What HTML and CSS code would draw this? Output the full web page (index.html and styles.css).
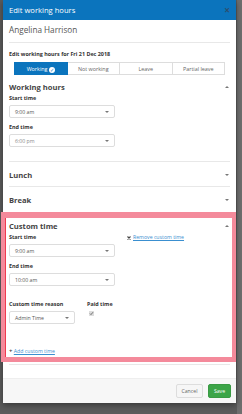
FILE: index.html
```html
<!DOCTYPE html>
<html lang="en">
<head>
    <meta charset="UTF-8">
    <title>Edit working hours</title>
    <link rel="stylesheet" href="styles.css">
</head>
<body>
    <div class="backdrop-strip"></div>
    <div class="modal">
        <div class="modal-header">
            <span class="modal-title">Edit working hours</span>
            <span class="modal-close">&times;</span>
        </div>

        <div class="modal-body">
            <div class="employee-name">Angelina Harrison</div>

            <div class="date-label">Edit working hours for Fri 21 Dec 2018</div>
            <div class="segments">
                <button class="segment active">Working <span class="tick">&#10003;</span></button>
                <button class="segment">Not working</button>
                <button class="segment">Leave</button>
                <button class="segment">Partial leave</button>
            </div>

            <div class="section">
                <div class="section-head">
                    <span>Working hours</span>
                    <span class="caret up"></span>
                </div>
                <label class="field-label">Start time</label>
                <div class="select">9:00 am<span class="caret"></span></div>
                <label class="field-label">End time</label>
                <div class="select muted">6:00 pm<span class="caret"></span></div>
            </div>

            <div class="section collapsed">
                <div class="section-head">
                    <span>Lunch</span>
                    <span class="caret"></span>
                </div>
            </div>

            <div class="section collapsed last">
                <div class="section-head">
                    <span>Break</span>
                    <span class="caret"></span>
                </div>
            </div>
        </div>

        <div class="highlight">
            <div class="section-head">
                <span>Custom time</span>
                <span class="caret up"></span>
            </div>
            <div class="row">
                <div class="col">
                    <label class="field-label">Start time</label>
                    <div class="select">9:00 am<span class="caret"></span></div>
                    <label class="field-label">End time</label>
                    <div class="select">10:00 am<span class="caret"></span></div>
                </div>
                <a class="remove-link">
                    <svg class="x" width="4" height="4" viewBox="0 0 4 4"><path d="M0.5 0.5L3.5 3.5M3.5 0.5L0.5 3.5" stroke="#444" stroke-width="1.1"/></svg>
                    <u>Remove custom time</u>
                </a>
            </div>
            <div class="row reason-row">
                <div>
                    <label class="field-label">Custom time reason</label>
                    <div class="select small">Admin Time<span class="caret"></span></div>
                </div>
                <div class="paid">
                    <label class="field-label">Paid time</label>
                    <span class="checkbox">
                        <svg width="5" height="5" viewBox="0 0 5 5"><path d="M1 2.6L2 3.6L4 1.2" stroke="#555" stroke-width="0.8" fill="none"/></svg>
                    </span>
                </div>
            </div>
            <a class="add-link"><span class="plus">+</span> <u>Add custom time</u></a>
        </div>

        <div class="body-end"></div>

        <div class="modal-footer">
            <button class="btn btn-cancel">Cancel</button>
            <button class="btn btn-save">Save</button>
        </div>
    </div>
</body>
</html>
```

FILE: styles.css
```css
* {
    margin: 0;
    padding: 0;
    box-sizing: border-box;
    font-family: 'Open Sans', sans-serif;
}

body {
    background: #5b5b5b;
    width: 242px;
    height: 414px;
    overflow: hidden;
    position: relative;
}

.backdrop-strip {
    position: absolute;
    right: 0;
    top: 0;
    width: 5px;
    height: 414px;
    background: #6e6e6e;
}

.modal {
    position: relative;
    margin-left: 3px;
    width: 233px;
    height: 403px;
    background: #fff;
    display: flex;
    flex-direction: column;
    box-shadow: 0 2px 6px rgba(0,0,0,0.4);
}

.modal-header {
    background: #0b74bd;
    height: 20px;
    flex-shrink: 0;
    display: flex;
    align-items: center;
    justify-content: space-between;
    padding: 0 6px;
    color: #fff;
}

.modal-title {
    font-size: 7.6px;
}

.modal-close {
    color: #2c4f6e;
    font-size: 10px;
    font-weight: 700;
}

.modal-body {
    padding: 0 6px;
}

.employee-name {
    font-size: 8.2px;
    line-height: 12px;
    color: #555;
    padding: 4px 0 6px;
    border-bottom: 1px solid #e8e8e8;
}

.date-label {
    font-size: 5.4px;
    line-height: 8px;
    font-weight: 700;
    color: #333;
    margin-top: 7px;
}

.segments {
    display: flex;
    margin: 4px 5px 0;
}

.segment {
    flex: 1;
    height: 13px;
    border: 1px solid #ddd;
    border-left: none;
    background: #fff;
    color: #666;
    font-size: 5.4px;
}

.segment:first-child {
    border-left: 1px solid #ddd;
}

.segment.active {
    background: #0b74bd;
    border-color: #0b74bd;
    color: #fff;
}

.tick {
    display: inline-block;
    width: 6px;
    height: 6px;
    border-radius: 50%;
    background: #fff;
    color: #0b74bd;
    font-size: 4.5px;
    line-height: 6px;
    text-align: center;
    vertical-align: -1px;
}

.section {
    border-bottom: 1px solid #e8e8e8;
    padding-bottom: 14px;
}

.section.collapsed {
    padding-bottom: 6px;
}

.section.last {
    border-bottom: none;
}

.section-head {
    display: flex;
    justify-content: space-between;
    align-items: center;
    font-size: 7.6px;
    line-height: 10px;
    font-weight: 700;
    color: #444;
    margin-top: 7px;
    padding-right: 1px;
}

.section.collapsed .section-head {
    margin-top: 8px;
}

.caret {
    width: 0;
    height: 0;
    border-left: 2.5px solid transparent;
    border-right: 2.5px solid transparent;
    border-top: 2.5px solid #777;
}

.caret.up {
    border-top: none;
    border-bottom: 2.5px solid #777;
}

.field-label {
    display: block;
    font-size: 5.4px;
    line-height: 7px;
    font-weight: 700;
    color: #333;
    margin-top: 6px;
    margin-bottom: 3px;
}

.section-head + .field-label,
.col .field-label:first-child {
    margin-top: 3px;
}

.select {
    width: 106px;
    height: 13px;
    border: 1px solid #ddd;
    border-radius: 2px;
    font-size: 5.2px;
    color: #555;
    padding: 0 5px;
    display: flex;
    justify-content: space-between;
    align-items: center;
}

.select.muted {
    color: #888;
}

.select.small {
    width: 66px;
}

.highlight {
    margin: 1px 0 0 -2px;
    border: 6px solid #f48a9b;
    border-left-width: 4px;
    border-right-width: 4px;
    border-bottom-width: 5px;
    box-shadow: inset 1px 0 0 #f03a4f;
    padding: 3px 2px 2px 4px;
}

.highlight .section-head {
    margin-top: 0;
}

.row {
    display: flex;
    align-items: flex-start;
}

.col {
    width: 118px;
}

.remove-link {
    font-size: 5.2px;
    line-height: 7px;
    color: #3a8fd0;
    margin-top: 3px;
    display: flex;
    align-items: center;
    gap: 2px;
}

.reason-row {
    margin-top: 9px;
}

.paid {
    margin-left: 12px;
}

.checkbox {
    display: block;
    width: 5px;
    height: 5px;
    background: #ddd;
    margin: 3px 0 0 2px;
}

.checkbox svg {
    display: block;
}

.add-link {
    display: block;
    font-size: 5.2px;
    line-height: 8px;
    color: #3a8fd0;
    margin-top: 23px;
}

.add-link .plus {
    color: #444;
    font-weight: 700;
    font-size: 6px;
}

.body-end {
    margin: 2px 6px 0;
    border-bottom: 1px solid #e8e8e8;
}

.modal-footer {
    margin-top: auto;
    height: 25px;
    flex-shrink: 0;
    background: #f7f7f7;
    border-top: 1px solid #eee;
    display: flex;
    justify-content: flex-end;
    align-items: center;
    gap: 5px;
    padding: 0 5px;
}

.btn {
    height: 14px;
    font-size: 5.2px;
    background: #f6f6f6;
    border: 1px solid #ddd;
    border-radius: 2px;
    color: #666;
}

.btn-cancel {
    width: 27px;
}

.btn-save {
    width: 23px;
    background: #3ca548;
    border-color: #3a9a44;
    color: #fff;
}
```
